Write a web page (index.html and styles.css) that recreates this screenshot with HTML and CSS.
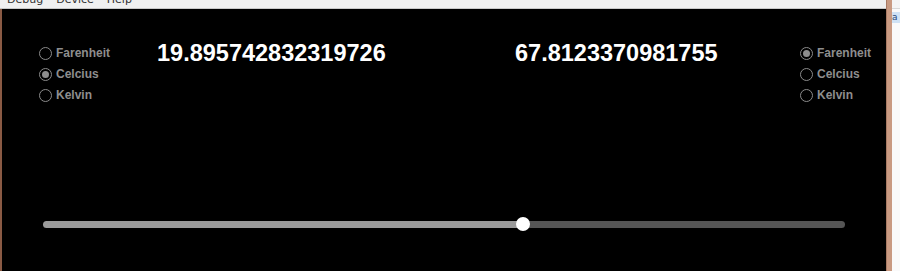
FILE: index.html
```html
<!DOCTYPE html>
<html>
<head>
<meta charset="utf-8">
<link rel="stylesheet" href="styles.css">
</head>
<body>
<div class="screen">
  <div class="app">
    <div class="menubar">
      <span class="menu">Debug</span>
      <span class="menu">Device</span>
      <span class="menu">Help</span>
    </div>
    <div class="body-row">
      <div class="left-edge"></div>
      <div class="panel">
        <div class="top-row">
          <div class="radios">
            <div class="radio"><span class="dot"></span>Farenheit</div>
            <div class="radio"><span class="dot checked"></span>Celcius</div>
            <div class="radio"><span class="dot"></span>Kelvin</div>
          </div>
          <div class="value value-left">19.895742832319726</div>
          <div class="value value-right">67.8123370981755</div>
          <div class="radios radios-right">
            <div class="radio"><span class="dot checked"></span>Farenheit</div>
            <div class="radio"><span class="dot"></span>Celcius</div>
            <div class="radio"><span class="dot"></span>Kelvin</div>
          </div>
        </div>
        <div class="slider">
          <div class="track-fill" style="width: 480px"></div>
          <div class="thumb"></div>
          <div class="track-rest"></div>
        </div>
      </div>
    </div>
  </div>
  <div class="frame-border"></div>
  <div class="side-strip">
    <div class="side-top"></div>
    <div class="side-tab">a</div>
  </div>
</div>
</body>
</html>
```
FILE: styles.css
```css
html, body {
  margin: 0;
  padding: 0;
  background: #000;
}
.screen {
  width: 900px;
  height: 271px;
  display: flex;
  overflow: hidden;
}
.app {
  width: 886px;
  display: flex;
  flex-direction: column;
}
.menubar {
  height: 8px;
  background: #f0f0f0;
  border-bottom: 1px solid #c8c8c8;
  display: flex;
  gap: 13px;
  padding-left: 7px;
  overflow: hidden;
  font-family: "DejaVu Sans", "Liberation Sans", sans-serif;
  font-size: 11px;
  color: #333;
}
.menu {
  margin-top: -7px;
  line-height: 14px;
}
.body-row {
  flex: 1;
  display: flex;
}
.left-edge {
  width: 2px;
  background: #8a5a44;
}
.panel {
  flex: 1;
  background: #000;
  display: flex;
  flex-direction: column;
  padding: 37px 0 0 37px;
  font-family: "Liberation Sans", Arial, sans-serif;
}
.top-row {
  display: flex;
  align-items: flex-start;
}
.radios {
  display: flex;
  flex-direction: column;
  gap: 7px;
  width: 118px;
}
.radios-right {
  width: auto;
  margin-left: 80px;
}
.radio {
  display: flex;
  align-items: center;
  gap: 4px;
  height: 14px;
  color: #8e8e8e;
  font-weight: bold;
  font-size: 12px;
}
.dot {
  width: 13px;
  height: 13px;
  box-sizing: border-box;
  border: 1.5px solid #8a8a8a;
  border-radius: 50%;
  display: flex;
  align-items: center;
  justify-content: center;
}
.dot.checked::after {
  content: "";
  width: 7px;
  height: 7px;
  border-radius: 50%;
  background: #8e8e8e;
}
.value {
  color: #fff;
  font-weight: bold;
  font-size: 23.5px;
  line-height: 26px;
  margin-top: -6px;
}
.value-left {
  width: 358px;
}
.value-right {
  width: 205px;
}
.slider {
  margin-top: 115px;
  margin-left: 4px;
  width: 802px;
  height: 14px;
  display: flex;
  align-items: center;
}
.track-fill {
  height: 7px;
  background: #9a9a9a;
  border-radius: 4px 0 0 4px;
}
.thumb {
  width: 14px;
  height: 14px;
  border-radius: 50%;
  background: #fff;
  margin: 0 -7px;
  position: relative;
  z-index: 1;
}
.track-rest {
  flex: 1;
  height: 7px;
  background: #555;
  border-radius: 0 4px 4px 0;
}
.frame-border {
  width: 6px;
  background: #c99a82;
  border-left: 1px solid #a87a64;
  box-sizing: border-box;
}
.side-strip {
  flex: 1;
  background: #fafafa;
  display: flex;
  flex-direction: column;
}
.side-top {
  height: 8px;
  border-bottom: 1px solid #d8d8d8;
  background: #f4f4f4;
}
.side-tab {
  margin-top: 3px;
  height: 11px;
  background: #cfe2f5;
  color: #2a4a7a;
  font-family: "DejaVu Sans", sans-serif;
  font-size: 9px;
  line-height: 11px;
  overflow: hidden;
}
```
